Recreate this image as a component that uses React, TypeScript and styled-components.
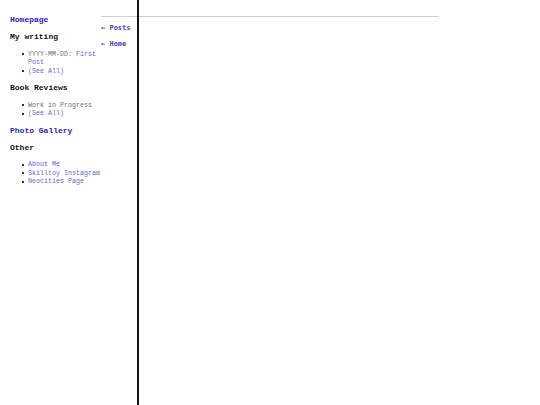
import React from "react";
import styled, { createGlobalStyle } from "styled-components";

const Global = createGlobalStyle`
  html, body { margin: 0; padding: 0; background: #fff; }
  body { font-family: "Courier New", "Liberation Mono", monospace; color: #111; }
`;

const Page = styled.div`
  display: flex;
  align-items: stretch;
  min-height: 405px;
`;

const Sidebar = styled.nav`
  width: 91px;
  padding: 8px 0 0 10px;
  flex: none;
`;

const Heading = styled.div<{ $link?: boolean }>`
  font-size: 8px;
  line-height: 10px;
  font-weight: bold;
  margin: 7px 0;
  color: ${(p) => (p.$link ? "#2222cc" : "#111")};
`;

const List = styled.ul`
  margin: 7.5px 0 8px;
  padding-left: 18px;
  list-style: none;
  font-size: 6.67px;
  line-height: 8.5px;
  color: #707070;
`;

const Item = styled.li`
  position: relative;
  &::before {
    content: "";
    position: absolute;
    left: -6px;
    top: 3.5px;
    width: 2px;
    height: 2px;
    background: #333;
  }
`;

const Link = styled.span`
  color: #6464dd;
`;

const Main = styled.div`
  display: grid;
  grid-template-columns: 36px 302px;
  grid-template-rows: 16px 1px auto;
  flex: none;
`;

const Rule = styled.div`
  grid-column: 1 / 3;
  grid-row: 2;
  background: #cfcfcf;
`;

const Divider = styled.div`
  grid-column: 2;
  grid-row: 1 / 4;
  border-left: 2px solid #111;
  min-height: 405px;
`;

const BackNav = styled.div`
  grid-column: 1;
  grid-row: 3;
  display: flex;
  flex-direction: column;
  gap: 8px;
  padding-top: 7px;
`;

const BackLink = styled.span`
  font-family: "DejaVu Sans Mono", monospace;
  font-size: 7px;
  line-height: 8px;
  font-weight: bold;
  color: #4444bb;
  white-space: nowrap;
`;

export default function App() {
  return (
    <>
      <Global />
      <Page>
        <Sidebar>
          <Heading $link>Homepage</Heading>
          <Heading>My writing</Heading>
          <List>
            <Item>
              YYYY-MM-DD: <Link>First Post</Link>
            </Item>
            <Item>
              <Link>(See All)</Link>
            </Item>
          </List>
          <Heading>Book Reviews</Heading>
          <List>
            <Item>Work in Progress</Item>
            <Item>
              <Link>(See All)</Link>
            </Item>
          </List>
          <Heading $link>Photo Gallery</Heading>
          <Heading>Other</Heading>
          <List>
            <Item>
              <Link>About Me</Link>
            </Item>
            <Item>
              <Link>Skilltoy Instagram</Link>
            </Item>
            <Item>
              <Link>Neocities Page</Link>
            </Item>
          </List>
        </Sidebar>
        <Main>
          <Rule />
          <BackNav>
            <BackLink>← Posts</BackLink>
            <BackLink>← Home</BackLink>
          </BackNav>
          <Divider />
        </Main>
      </Page>
    </>
  );
}
